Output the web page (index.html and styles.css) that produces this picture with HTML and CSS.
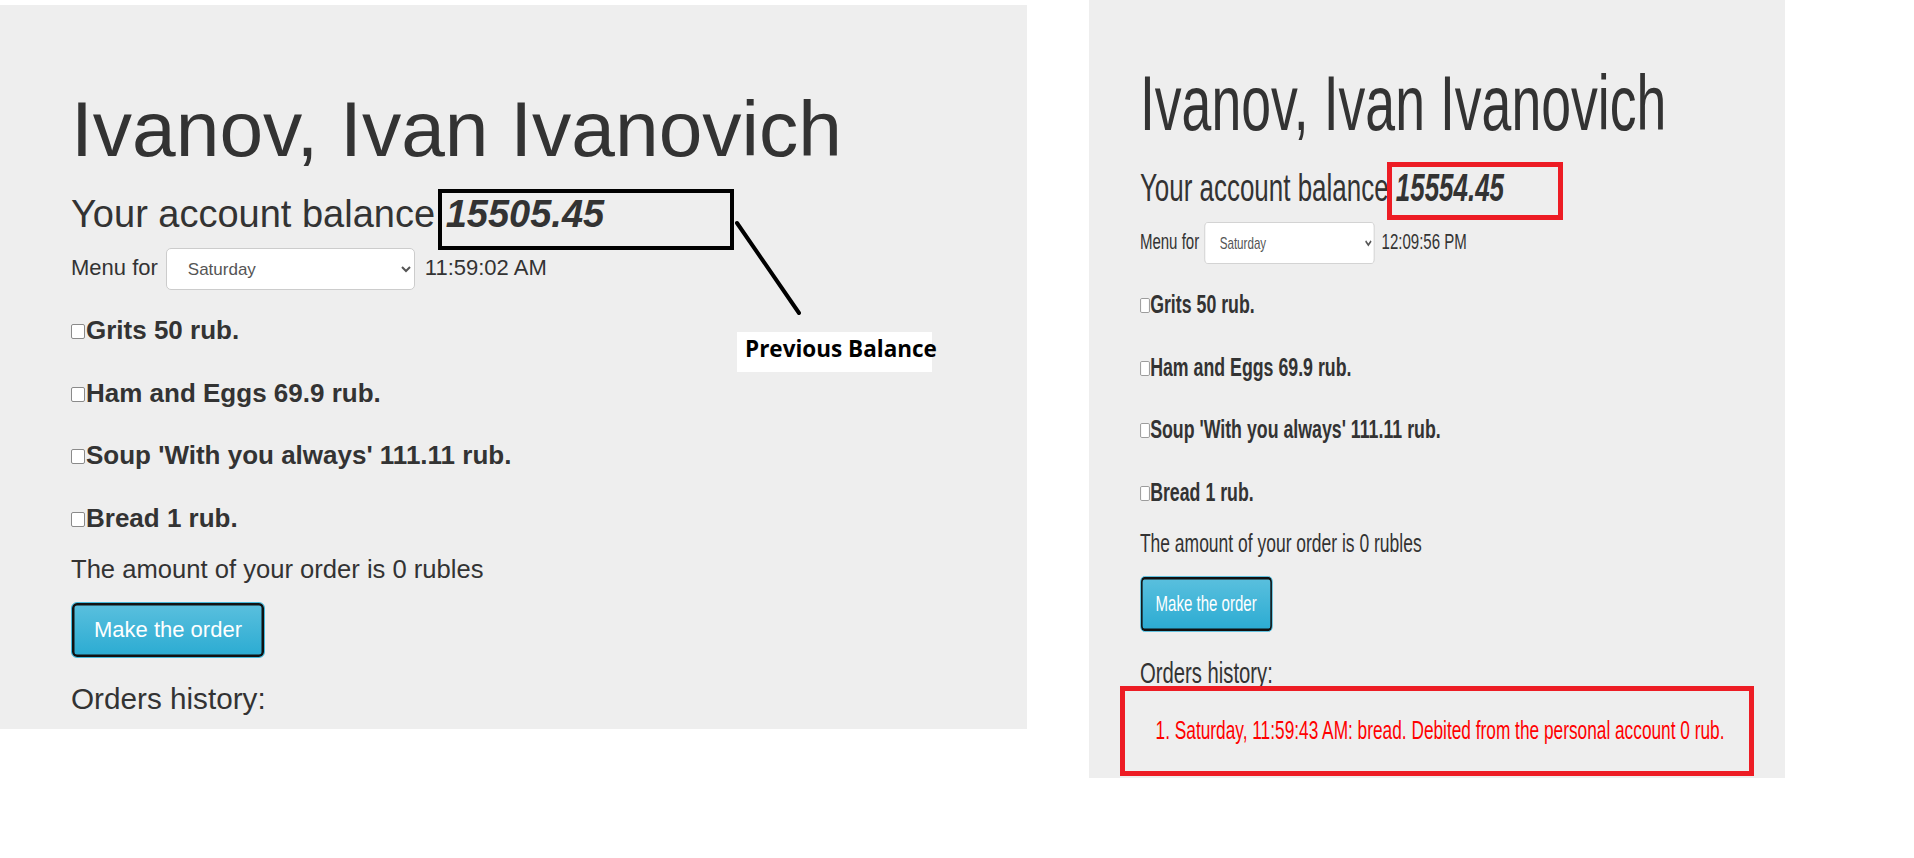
FILE: index.html
```html
<!DOCTYPE html>
<html lang="en">
<head>
<meta charset="utf-8">
<title>Account balance — before and after</title>
<link rel="stylesheet" href="styles.css">
</head>
<body>
<main class="canvas">
  <section class="shot shot-before">
    <div class="page">
      <h1 class="name">Ivanov, Ivan Ivanovich</h1>
      <h2 class="balance">Your account balance <b class="amount-value">15505.45</b></h2>
      <div class="menu-row">
        <span class="menu-label">Menu for</span>
        <select class="menu-select"><option>Saturday</option></select>
        <span class="menu-time">11:59:02 AM</span>
      </div>
      <ul class="dishes">
        <li class="dish"><label><input type="checkbox" class="dish-check">Grits 50 rub.</label></li>
        <li class="dish"><label><input type="checkbox" class="dish-check">Ham and Eggs 69.9 rub.</label></li>
        <li class="dish"><label><input type="checkbox" class="dish-check">Soup 'With you always' 111.11 rub.</label></li>
        <li class="dish"><label><input type="checkbox" class="dish-check">Bread 1 rub.</label></li>
      </ul>
      <p class="amount">The amount of your order is 0 rubles</p>
      <button class="order-btn" type="button">Make the order</button>
      <h3 class="history">Orders history:</h3>
    </div>
    <div class="mark-box"></div>
    <svg class="mark-line" width="80" height="110" viewBox="0 0 80 110" aria-hidden="true">
      <line x1="4" y1="4" x2="66" y2="94" stroke="#000" stroke-width="4" stroke-linecap="round"/>
    </svg>
    <div class="mark-label">Previous Balance</div>
  </section>

  <section class="shot shot-after">
    <div class="page page-squeezed">
      <h1 class="name">Ivanov, Ivan Ivanovich</h1>
      <h2 class="balance">Your account balance <b class="amount-value">15554.45</b></h2>
      <div class="menu-row">
        <span class="menu-label">Menu for</span>
        <select class="menu-select"><option>Saturday</option></select>
        <span class="menu-time">12:09:56 PM</span>
      </div>
      <ul class="dishes">
        <li class="dish"><label><input type="checkbox" class="dish-check">Grits 50 rub.</label></li>
        <li class="dish"><label><input type="checkbox" class="dish-check">Ham and Eggs 69.9 rub.</label></li>
        <li class="dish"><label><input type="checkbox" class="dish-check">Soup 'With you always' 111.11 rub.</label></li>
        <li class="dish"><label><input type="checkbox" class="dish-check">Bread 1 rub.</label></li>
      </ul>
      <p class="amount">The amount of your order is 0 rubles</p>
      <button class="order-btn" type="button">Make the order</button>
      <h3 class="history">Orders history:</h3>
      <ol class="orders">
        <li>Saturday, 11:59:43 AM: bread. Debited from the personal account 0 rub.</li>
      </ol>
    </div>
    <div class="red-box red-box-balance"></div>
    <div class="red-box red-box-orders"></div>
  </section>
</main>
</body>
</html>
```

FILE: styles.css
```css
* {
  box-sizing: border-box;
}

html,
body {
  margin: 0;
  background: #fff;
}

body {
  font-family: "Liberation Sans", Arial, sans-serif;
  color: #333;
}

.canvas {
  display: flex;
  align-items: flex-start;
  gap: 62px;
  width: 1914px;
  height: 858px;
  overflow: hidden;
}

.shot {
  position: relative;
  flex: none;
  background: #eee;
  overflow: hidden;
}

.shot-before {
  width: 1027px;
  height: 724px;
  margin-top: 5px;
}

.shot-after {
  width: 696px;
  height: 778px;
}

.page {
  padding: 82px 0 0 71px;
}

.page-squeezed {
  width: 1019px;
  padding: 61px 0 0 74.5px;
  transform: scaleX(0.683);
  transform-origin: 0 0;
}

.name {
  margin: 0;
  font-size: 78.5px;
  line-height: 85px;
  font-weight: 400;
  white-space: nowrap;
}

.balance {
  margin: 20px 0 0;
  font-size: 38px;
  line-height: 44px;
  font-weight: 400;
  white-space: nowrap;
}

.amount-value {
  font-weight: 700;
  font-style: italic;
}

.menu-row {
  margin-top: 12px;
  display: flex;
  align-items: baseline;
  font-size: 22px;
  white-space: nowrap;
}

.menu-select {
  width: 249px;
  height: 42px;
  margin: 0 10px 0 8px;
  padding: 0 8px 0 17px;
  border: 1px solid #ccc;
  border-radius: 5px;
  background-color: #fff;
  color: #555;
  font-family: "Liberation Sans", Arial, sans-serif;
  font-size: 17px;
}

.dishes {
  list-style: none;
  margin: 22px 0 0;
  padding: 0;
  display: flex;
  flex-direction: column;
  gap: 26.6px;
}

.dish {
  font-size: 26px;
  line-height: 36px;
  font-weight: 700;
  white-space: nowrap;
}

.dish-check {
  appearance: none;
  -webkit-appearance: none;
  width: 14px;
  height: 15px;
  margin: 0 1px 0 0;
  border: 1px solid #8a8a8a;
  border-radius: 2px;
  background: #fff;
  vertical-align: baseline;
}

.amount {
  margin: 15px 0 0;
  font-size: 25.6px;
  line-height: 36px;
  white-space: nowrap;
}

.order-btn {
  display: block;
  margin-top: 15px;
  width: 194px;
  height: 56px;
  padding: 0;
  border: 1px solid #46b8da;
  border-radius: 6px;
  background: linear-gradient(to bottom, #5bc0de 0%, #2aabd2 100%);
  box-shadow: inset 0 0 0 2.5px #111;
  color: #fff;
  font-family: "Liberation Sans", Arial, sans-serif;
  font-size: 22px;
  line-height: 54px;
}

.history {
  margin: 21px 0 0;
  font-size: 29.7px;
  line-height: 40px;
  font-weight: 400;
  white-space: nowrap;
}

.orders {
  margin: 19px 0 0;
  padding-left: 23px;
  list-style-position: inside;
  color: #f00;
  font-size: 25.3px;
  line-height: 36px;
  white-space: nowrap;
}

/* annotations drawn over the screenshots */
.mark-box {
  position: absolute;
  left: 438px;
  top: 184px;
  width: 296px;
  height: 61px;
  border: 4px solid #000;
}

.mark-line {
  position: absolute;
  left: 733px;
  top: 214px;
}

.mark-label {
  position: absolute;
  left: 737px;
  top: 327px;
  width: 195px;
  height: 40px;
  padding-left: 8px;
  background: #fff;
  color: #000;
  font-family: "Open Sans", sans-serif;
  font-weight: 700;
  font-size: 22.5px;
  line-height: 33px;
  white-space: nowrap;
}

.red-box {
  position: absolute;
  border: 5px solid #ed1c24;
}

.red-box-balance {
  left: 298px;
  top: 162px;
  width: 176px;
  height: 58px;
}

.red-box-orders {
  left: 31px;
  top: 686px;
  width: 634px;
  height: 90px;
}
```
